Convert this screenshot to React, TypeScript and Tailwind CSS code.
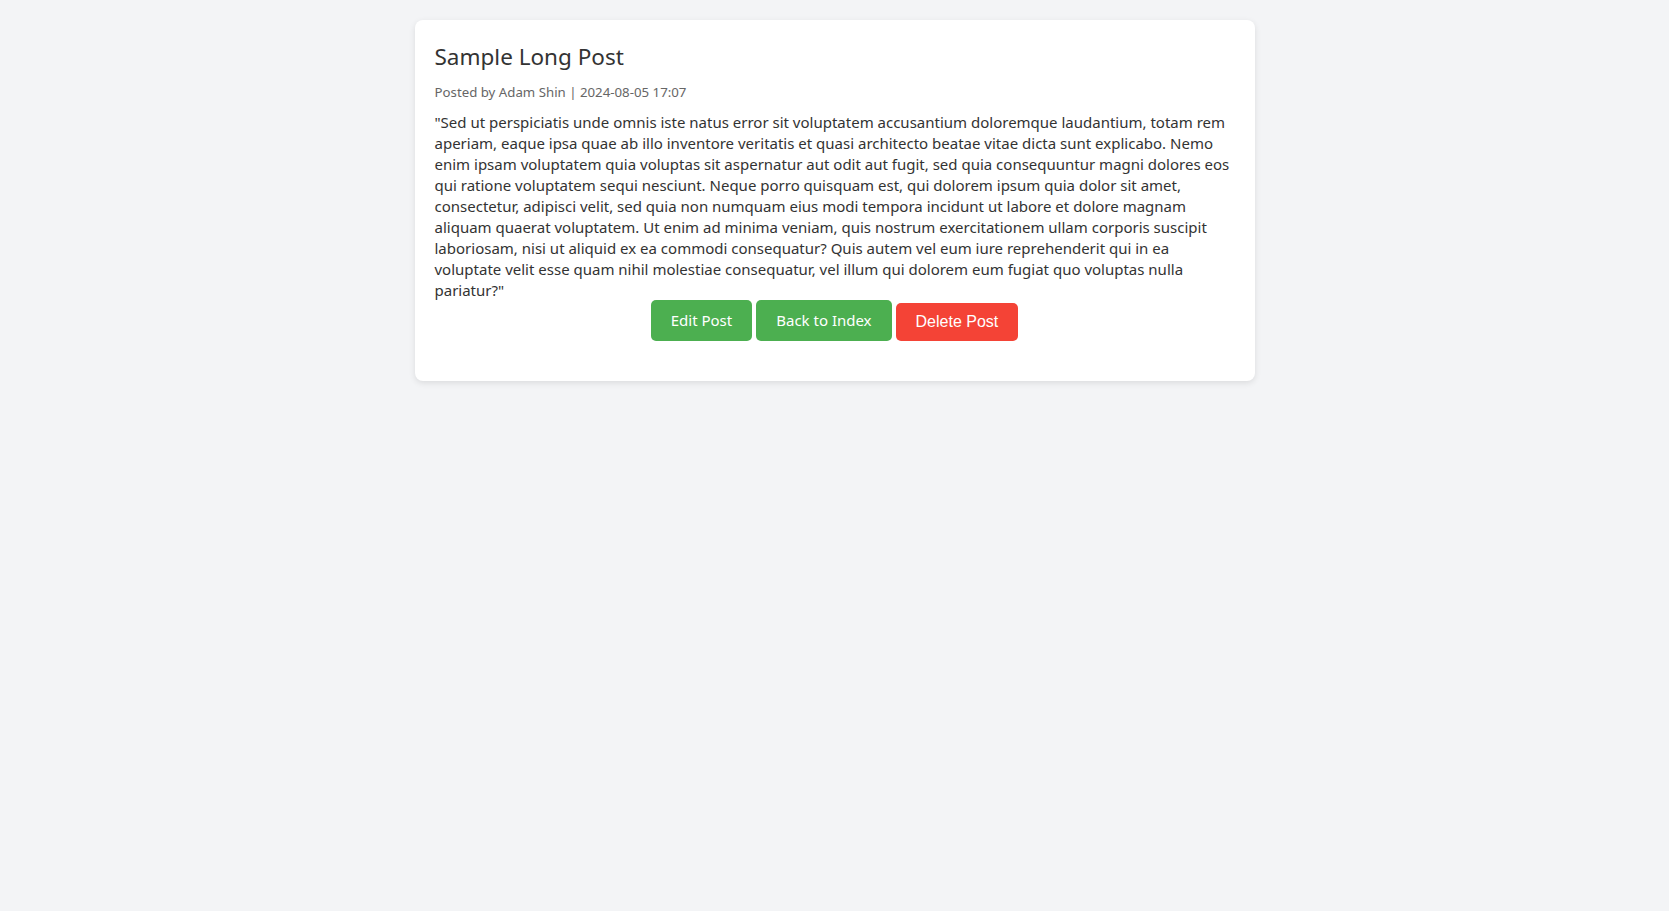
const body =
  '"Sed ut perspiciatis unde omnis iste natus error sit voluptatem accusantium doloremque laudantium, totam rem aperiam, eaque ipsa quae ab illo inventore veritatis et quasi architecto beatae vitae dicta sunt explicabo. Nemo enim ipsam voluptatem quia voluptas sit aspernatur aut odit aut fugit, sed quia consequuntur magni dolores eos qui ratione voluptatem sequi nesciunt. Neque porro quisquam est, qui dolorem ipsum quia dolor sit amet, consectetur, adipisci velit, sed quia non numquam eius modi tempora incidunt ut labore et dolore magnam aliquam quaerat voluptatem. Ut enim ad minima veniam, quis nostrum exercitationem ullam corporis suscipit laboriosam, nisi ut aliquid ex ea commodi consequatur? Quis autem vel eum iure reprehenderit qui in ea voluptate velit esse quam nihil molestiae consequatur, vel illum qui dolorem eum fugiat quo voluptas nulla pariatur?"';

export default function App() {
  return (
    <div className="min-h-screen bg-[#f3f4f6] px-5 pt-5 font-['Noto_Sans',sans-serif] text-[#333]">
      <div className="mx-auto max-w-[840px] rounded-lg bg-white p-5 shadow-[0_2px_6px_rgba(0,0,0,0.1)]">
        <h1 className="text-[22.5px] leading-[34px] font-normal text-[#333]">Sample Long Post</h1>
        <p className="mt-[9px] text-[13.25px] leading-[18px] text-[#666]">
          Posted by Adam Shin | 2024-08-05 17:07
        </p>
        <p className="mt-[11px] text-[15px] leading-[21px] text-[#333]">{body}</p>
        <div className="-mt-px mb-5 flex items-end justify-center gap-1">
          <a
            href="#"
            className="rounded-[5px] bg-[#4caf50] px-5 py-[10px] text-[15px] leading-[21px] text-white"
          >
            Edit Post
          </a>
          <a
            href="#"
            className="rounded-[5px] bg-[#4caf50] px-5 py-[10px] text-[15px] leading-[21px] text-white"
          >
            Back to Index
          </a>
          <button
            type="button"
            className="rounded-[5px] bg-[#f44336] px-5 py-[10px] font-['Liberation_Sans',Arial,sans-serif] text-[16px] leading-[18px] text-white"
          >
            Delete Post
          </button>
        </div>
      </div>
    </div>
  );
}
